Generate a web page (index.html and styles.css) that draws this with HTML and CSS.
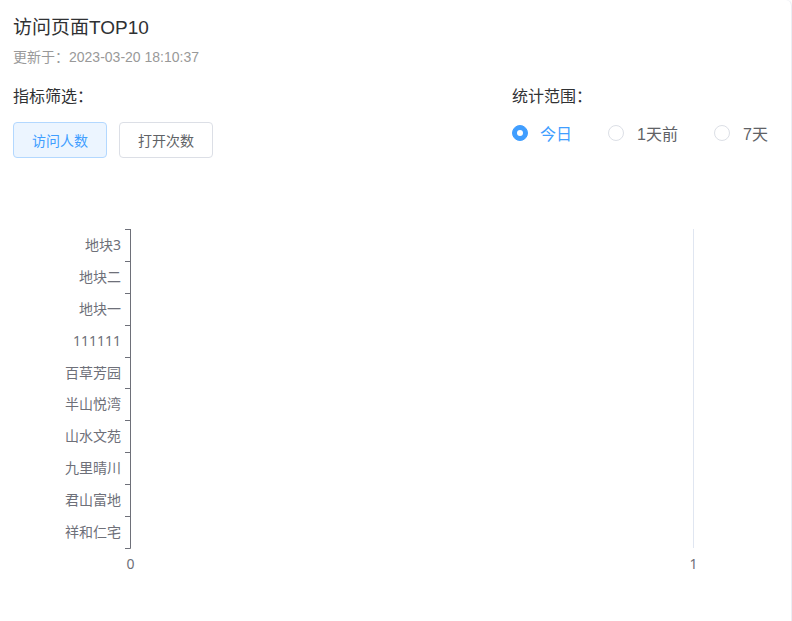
FILE: index.html
```html
<!DOCTYPE html>
<html lang="zh">
<head>
<meta charset="utf-8">
<title>访问页面TOP10</title>
<link rel="stylesheet" href="styles.css">
</head>
<body>
<div class="card">
  <div class="head">
    <div class="title">访问页面TOP10</div>
    <div class="sub">更新于：2023-03-20 18:10:37</div>
    <div class="filters">
      <div class="col-left">
        <div class="label">指标筛选：</div>
        <div class="btns">
          <button class="btn active">访问人数</button>
          <button class="btn">打开次数</button>
        </div>
      </div>
      <div class="col-right">
        <div class="label">统计范围：</div>
        <div class="radios">
          <label class="radio checked"><span class="dot"></span><span class="rtext">今日</span></label>
          <label class="radio r2"><span class="dot"></span><span class="rtext">1天前</span></label>
          <label class="radio r3"><span class="dot"></span><span class="rtext">7天</span></label>
        </div>
      </div>
    </div>
  </div>
  <svg class="chart" width="790" height="451" viewBox="0 170 790 451" xmlns="http://www.w3.org/2000/svg">
    <line x1="693.5" y1="229" x2="693.5" y2="548" stroke="#e0e6f1" stroke-width="1"/>
    <g stroke="#6e7079" stroke-width="1" fill="none">
      <line x1="130.5" y1="229" x2="130.5" y2="548.5"/>
      <line x1="125" y1="229.5" x2="130.5" y2="229.5"/>
      <line x1="125" y1="261.5" x2="130.5" y2="261.5"/>
      <line x1="125" y1="293.5" x2="130.5" y2="293.5"/>
      <line x1="125" y1="325.5" x2="130.5" y2="325.5"/>
      <line x1="125" y1="357.5" x2="130.5" y2="357.5"/>
      <line x1="125" y1="388.5" x2="130.5" y2="388.5"/>
      <line x1="125" y1="420.5" x2="130.5" y2="420.5"/>
      <line x1="125" y1="452.5" x2="130.5" y2="452.5"/>
      <line x1="125" y1="484.5" x2="130.5" y2="484.5"/>
      <line x1="125" y1="516.5" x2="130.5" y2="516.5"/>
      <line x1="125" y1="548.5" x2="130.5" y2="548.5"/>
    </g>
    <g class="ylab" text-anchor="end">
      <text x="121" y="250">地块3</text>
      <text x="121" y="282">地块二</text>
      <text x="121" y="314">地块一</text>
      <text x="121" y="346">111111</text>
      <text x="121" y="378">百草芳园</text>
      <text x="121" y="409">半山悦湾</text>
      <text x="121" y="441">山水文苑</text>
      <text x="121" y="473">九里晴川</text>
      <text x="121" y="505">君山富地</text>
      <text x="121" y="537">祥和仁宅</text>
    </g>
    <g class="xlab" text-anchor="middle">
      <text x="130.5" y="569">0</text>
      <text x="693.5" y="569">1</text>
    </g>
  </svg>
</div>
</body>
</html>
```

FILE: styles.css
```css
* { box-sizing: border-box; }
html, body { margin: 0; padding: 0; background: #ffffff; }
body {
  font-family: "Liberation Sans", "Noto Sans CJK SC", sans-serif;
  color: #303133;
}
.card {
  width: 792px;
  height: 621px;
  background: #fff;
  border-right: 1px solid #ebeef5;
  border-radius: 0 6px 0 0;
  box-shadow: 1px 0 3px rgba(0,0,0,0.04);
  overflow: hidden;
}
.head {
  padding: 16px 13px 0 13px;
}
.title {
  font-size: 19px;
  line-height: 24px;
  color: #303133;
}
.sub {
  margin-top: 8px;
  font-size: 14px;
  line-height: 18px;
  color: #999999;
}
.filters {
  display: flex;
  margin-top: 21px;
}
.col-left { width: 499px; flex-shrink: 0; }
.col-right { flex: 1; min-width: 0; }
.label {
  font-size: 16px;
  line-height: 20px;
  color: #303133;
}
.btns {
  display: flex;
  gap: 12px;
  margin-top: 15px;
}
.btn {
  height: 36px;
  padding: 0;
  font-family: "Liberation Sans", "Noto Sans CJK SC", sans-serif;
  font-size: 14px;
  color: #606266;
  background: #fff;
  border: 1px solid #dcdfe6;
  border-radius: 4px;
  width: 94px;
}
.btn.active {
  color: #409eff;
  background: #ecf5ff;
  border-color: #b3d8ff;
}
.radios {
  display: flex;
  margin-top: 15px;
  height: 22px;
  align-items: center;
}
.radio {
  display: flex;
  align-items: center;
  font-size: 16px;
  color: #606266;
  flex-shrink: 0;
}
.radio.checked { width: 96px; color: #409eff; }
.radio.r2 { width: 106px; }
.dot {
  width: 16px;
  height: 16px;
  border-radius: 50%;
  border: 1px solid #dcdfe6;
  background: #fff;
  margin-right: 12px;
  position: relative;
}
.checked .dot {
  background: #409eff;
  border-color: #409eff;
}
.checked .dot::after {
  content: "";
  position: absolute;
  left: 4px;
  top: 4px;
  width: 6px;
  height: 6px;
  border-radius: 50%;
  background: #fff;
}
.r2 .dot, .r3 .dot { margin-right: 13px; }
.chart {
  display: block;
  margin-top: 12px;
}
.ylab text, .xlab text {
  font-family: "Noto Sans", "Noto Sans CJK SC", sans-serif;
  font-size: 14px;
  fill: #6e7079;
}
```
